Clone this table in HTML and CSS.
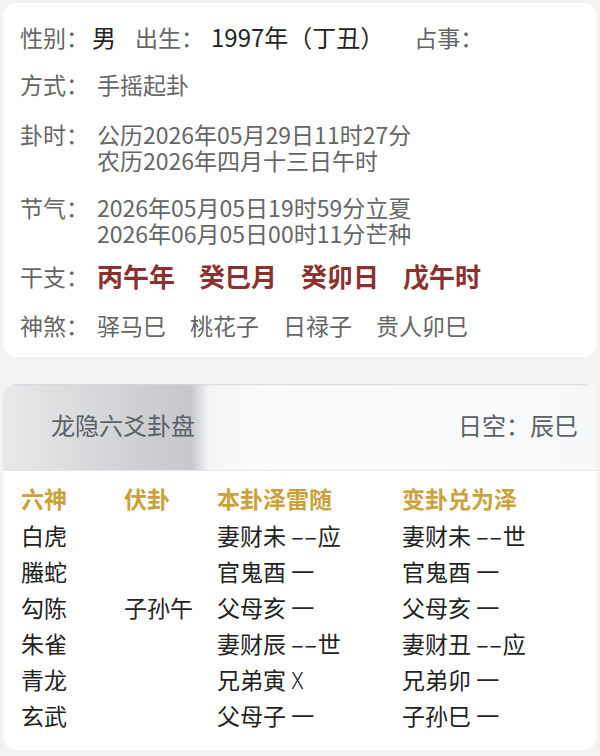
FILE: index.html
```html
<!DOCTYPE html>
<html lang="zh-CN">
<head>
<meta charset="utf-8">
<title>六爻排盘</title>
<link rel="stylesheet" href="styles.css">
</head>
<body>
<div class="page">
  <section class="card info">
    <div class="row r1">
      <span class="lab">性别：</span><span class="val v-sex">男</span>
      <span class="lab l-birth">出生：</span><span class="val v-birth">1997年（丁丑）</span>
      <span class="lab l-ask">占事：</span>
    </div>
    <div class="row r2">
      <span class="lab fixed">方式：</span><span class="txt">手摇起卦</span>
    </div>
    <div class="row r3">
      <span class="lab fixed">卦时：</span>
      <p class="lines">公历2026年05月29日11时27分<br>农历2026年四月十三日午时</p>
    </div>
    <div class="row r4">
      <span class="lab fixed">节气：</span>
      <p class="lines">2026年05月05日19时59分立夏<br>2026年06月05日00时11分芒种</p>
    </div>
    <div class="row r5">
      <span class="lab fixed">干支：</span>
      <div class="items gz"><span>丙午年</span><span>癸巳月</span><span>癸卯日</span><span>戊午时</span></div>
    </div>
    <div class="row r6">
      <span class="lab fixed">神煞：</span>
      <div class="items ss"><span>驿马巳</span><span>桃花子</span><span>日禄子</span><span>贵人卯巳</span></div>
    </div>
  </section>

  <section class="card pan">
    <header class="pan-head">
      <span class="pan-title">龙隐六爻卦盘</span>
      <span class="pan-kong">日空：辰巳</span>
    </header>
    <div class="table">
      <div class="tr th"><span>六神</span><span>伏卦</span><span>本卦泽雷随</span><span>变卦兑为泽</span></div>
      <div class="tr"><span>白虎</span><span></span><span>妻财未 <i class="yin">––</i>应</span><span>妻财未 <i class="yin">––</i>世</span></div>
      <div class="tr"><span>螣蛇</span><span></span><span>官鬼酉 一</span><span>官鬼酉 一</span></div>
      <div class="tr"><span>勾陈</span><span>子孙午</span><span>父母亥 一</span><span>父母亥 一</span></div>
      <div class="tr"><span>朱雀</span><span></span><span>妻财辰 <i class="yin">––</i>世</span><span>妻财丑 <i class="yin">––</i>应</span></div>
      <div class="tr"><span>青龙</span><span></span><span>兄弟寅 <i class="mv">X</i></span><span>兄弟卯 一</span></div>
      <div class="tr"><span>玄武</span><span></span><span>父母子 一</span><span>子孙巳 一</span></div>
    </div>
  </section>
</div>
</body>
</html>
```
FILE: styles.css
```css
* { box-sizing: border-box; }
html, body { margin: 0; padding: 0; }
body {
  background: #f2f3f5;
  font-family: "Noto Sans CJK SC", "Noto Sans", sans-serif;
  width: 600px;
  height: 756px;
  overflow: hidden;
}
.page { padding: 3px 3px 0 3px; }
.card {
  background: #fff;
  border-radius: 14px;
}

/* info card */
.info {
  display: flex;
  flex-direction: column;
  padding: 20px 0 19px 17px;
  color: #666;
  font-size: 23px;
}
.row { display: flex; align-items: flex-start; line-height: 26px; }
.r1 { line-height: 28px; font-size: 24px; }
.r1 .lab { font-size: 23px; }
.r2 { margin-top: 20px; }
.r3 { margin-top: 24px; }
.r4 { margin-top: 21px; }
.r5 { margin-top: 15px; line-height: 30px; }
.r6 { margin-top: 21px; }
.lab { color: #666; white-space: nowrap; }
.fixed { width: 77px; flex: none; }
.val { color: #222; }
.v-sex { margin-left: 3px; }
.l-birth { margin-left: 19px; }
.v-birth { margin-left: 7px; }
.l-ask { margin-left: 30px; }
.lines { margin: 0; white-space: nowrap; }
.items { display: flex; gap: 24px; }
.gz { color: #8c2f2f; font-weight: 700; font-size: 26px; }

/* pan card */
.pan { margin-top: 27px; overflow: hidden; }
.pan-head {
  height: 87px;
  display: flex;
  align-items: center;
  justify-content: space-between;
  padding: 0 19px 6px 48px;
  background: linear-gradient(90deg, #e8e9eb 0px, #dadcde 70px, #cbcdd0 150px, #c6c8cb 188px, #f4f5f7 206px, #fafbfc 260px, #f7f8fa 100%);
  border-bottom: 1px solid #e6e7e9;
  box-shadow: inset 0 2px 2px -1px #d6d7da;
  color: #5c6068;
  font-size: 24px;
}
.table {
  padding: 8px 0 17px 18px;
  color: #222;
  font-size: 23px;
}
.tr {
  display: grid;
  grid-template-columns: 103px 93px 185px 1fr;
  height: 36px;
  line-height: 36px;
  white-space: nowrap;
}
.th { height: 38px; line-height: 38px; color: #c9a23c; font-weight: 700; }
.tr i { font-style: normal; }
.yin { letter-spacing: 1px; }
.mv { font-weight: 300; }
```
